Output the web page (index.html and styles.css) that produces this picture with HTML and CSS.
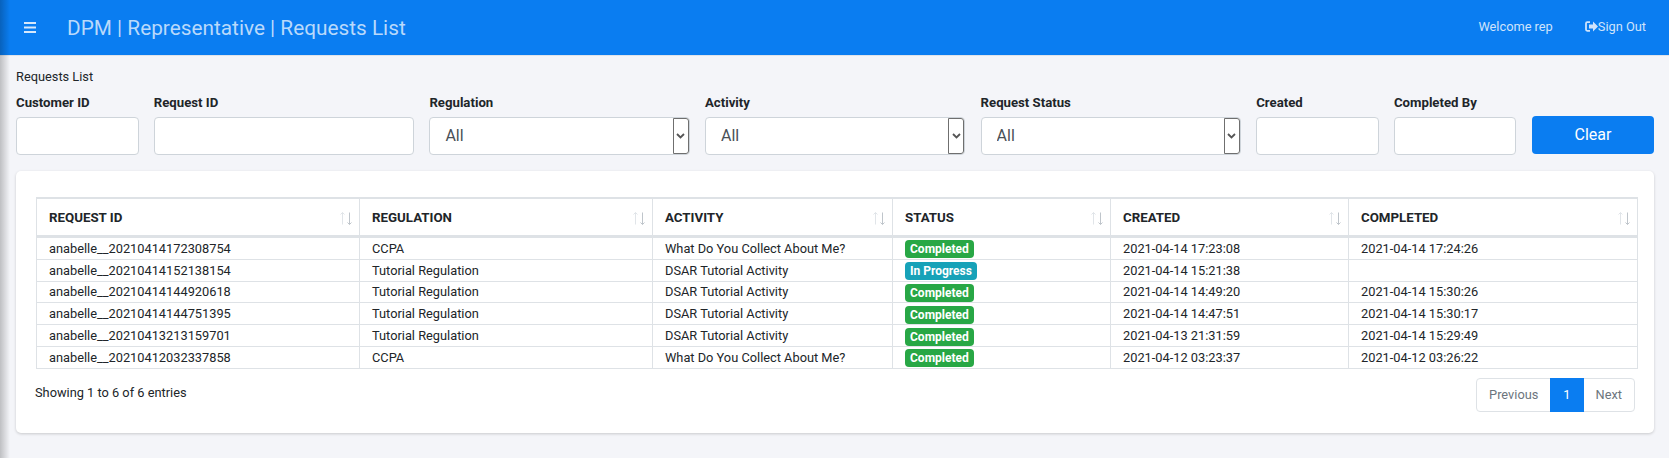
FILE: index.html
```html
<!DOCTYPE html>
<html lang="en">
<head>
  <meta charset="UTF-8">
  <title>DPM | Representative | Requests List</title>
  <meta name="viewport" content="width=device-width, initial-scale=1.0">
  <link rel="stylesheet" href="styles.css">
</head>
<body>
  <div class="side-shadow"></div>

  <svg class="sprite" width="0" height="0">
    <symbol id="sort-arrows" viewBox="0 0 14 13">
      <path d="M3.5 12.5V.5M1.5 2.5l2-2 2 2" fill="none" stroke="#e1e5e9"/>
      <path d="M10.5.5v12M8.5 10.5l2 2 2-2" fill="none" stroke="#bfc5cb"/>
    </symbol>
    <symbol id="chevron" viewBox="0 0 9 6">
      <path d="M1 1l3.5 3.5L8 1" fill="none" stroke="#555" stroke-width="1.8"/>
    </symbol>
  </svg>

  <header class="topbar">
    <span class="menu-btn">
      <svg width="12" height="11" viewBox="0 0 12 11"><path d="M0 1h12M0 5.5h12M0 10h12" stroke="#d6e8fc" stroke-width="2"/></svg>
    </span>
    <h1 class="page-title">DPM | Representative | Requests List</h1>
    <span class="welcome">Welcome rep</span>
    <a class="sign-out" href="#">
      <svg width="13" height="11" viewBox="0 0 13 11"><path d="M5 1.2H2.2Q1 1.2 1 2.4v6.2q0 1.2 1.2 1.2H5" fill="none" stroke="#cfe3fb" stroke-width="1.8"/><path d="M4 3.6h4V.6l5 4.9-5 4.9v-3H4z" fill="#cfe3fb"/></svg>Sign Out
    </a>
  </header>

  <main class="content">
    <div class="crumb">Requests List</div>

    <form class="filters">
      <div class="field f-small">
        <label for="customer">Customer ID</label>
        <input type="text" id="customer">
      </div>
      <div class="field f-wide">
        <label for="request">Request ID</label>
        <input type="text" id="request">
      </div>
      <div class="field f-wide">
        <label for="regulation">Regulation</label>
        <div class="select-wrap">
          <select id="regulation"><option>All</option></select>
          <span class="select-arrow"><svg width="9" height="6"><use href="#chevron"/></svg></span>
        </div>
      </div>
      <div class="field f-wide">
        <label for="activity">Activity</label>
        <div class="select-wrap">
          <select id="activity"><option>All</option></select>
          <span class="select-arrow"><svg width="9" height="6"><use href="#chevron"/></svg></span>
        </div>
      </div>
      <div class="field f-wide">
        <label for="status">Request Status</label>
        <div class="select-wrap">
          <select id="status"><option>All</option></select>
          <span class="select-arrow"><svg width="9" height="6"><use href="#chevron"/></svg></span>
        </div>
      </div>
      <div class="field f-small">
        <label for="created">Created</label>
        <input type="text" id="created">
      </div>
      <div class="field f-small">
        <label for="completed">Completed By</label>
        <input type="text" id="completed">
      </div>
      <button type="button" class="btn-clear">Clear</button>
    </form>

    <section class="card">
      <table class="requests">
        <colgroup>
          <col class="c1"><col class="c2"><col class="c3"><col class="c4"><col class="c5"><col class="c6">
        </colgroup>
        <thead>
          <tr>
            <th>REQUEST ID<svg class="sort" width="14" height="13"><use href="#sort-arrows"/></svg></th>
            <th>REGULATION<svg class="sort" width="14" height="13"><use href="#sort-arrows"/></svg></th>
            <th>ACTIVITY<svg class="sort" width="14" height="13"><use href="#sort-arrows"/></svg></th>
            <th>STATUS<svg class="sort" width="14" height="13"><use href="#sort-arrows"/></svg></th>
            <th>CREATED<svg class="sort" width="14" height="13"><use href="#sort-arrows"/></svg></th>
            <th>COMPLETED<svg class="sort" width="14" height="13"><use href="#sort-arrows"/></svg></th>
          </tr>
        </thead>
        <tbody>
          <tr>
            <td>anabelle__20210414172308754</td><td>CCPA</td><td>What Do You Collect About Me?</td>
            <td><span class="badge done">Completed</span></td><td>2021-04-14 17:23:08</td><td>2021-04-14 17:24:26</td>
          </tr>
          <tr>
            <td>anabelle__20210414152138154</td><td>Tutorial Regulation</td><td>DSAR Tutorial Activity</td>
            <td><span class="badge progress">In Progress</span></td><td>2021-04-14 15:21:38</td><td></td>
          </tr>
          <tr>
            <td>anabelle__20210414144920618</td><td>Tutorial Regulation</td><td>DSAR Tutorial Activity</td>
            <td><span class="badge done">Completed</span></td><td>2021-04-14 14:49:20</td><td>2021-04-14 15:30:26</td>
          </tr>
          <tr>
            <td>anabelle__20210414144751395</td><td>Tutorial Regulation</td><td>DSAR Tutorial Activity</td>
            <td><span class="badge done">Completed</span></td><td>2021-04-14 14:47:51</td><td>2021-04-14 15:30:17</td>
          </tr>
          <tr>
            <td>anabelle__20210413213159701</td><td>Tutorial Regulation</td><td>DSAR Tutorial Activity</td>
            <td><span class="badge done">Completed</span></td><td>2021-04-13 21:31:59</td><td>2021-04-14 15:29:49</td>
          </tr>
          <tr>
            <td>anabelle__20210412032337858</td><td>CCPA</td><td>What Do You Collect About Me?</td>
            <td><span class="badge done">Completed</span></td><td>2021-04-12 03:23:37</td><td>2021-04-12 03:26:22</td>
          </tr>
        </tbody>
      </table>

      <div class="table-foot">
        <span class="info">Showing 1 to 6 of 6 entries</span>
        <nav class="pager">
          <a href="#">Previous</a>
          <a href="#" class="active">1</a>
          <a href="#">Next</a>
        </nav>
      </div>
    </section>
  </main>
</body>
</html>
```

FILE: styles.css
```css
html, body {
  height: 100%;
}

body {
  margin: 0;
  font-family: Roboto, "Liberation Sans", sans-serif;
  font-size: 12.8px;
  color: #212529;
  background-color: #f4f5f9;
  overflow: hidden;
}

.sprite {
  display: block;
}

.side-shadow {
  position: absolute;
  left: 0;
  top: 0;
  bottom: 0;
  width: 10px;
  background: linear-gradient(to right, rgba(0, 0, 0, 0.22), rgba(0, 0, 0, 0));
}

.topbar {
  display: flex;
  align-items: center;
  height: 55px;
  padding: 0 23px 0 24px;
  background-color: #0a7df1;
  border-bottom: 1px solid #dfe3ea;
  color: #cfe3fb;
}

.menu-btn {
  display: flex;
  margin-right: 31px;
}

.page-title {
  flex: 1;
  margin: 0;
  font-size: 20.8px;
  font-weight: 400;
  color: #b9d9fb;
}

.welcome {
  margin: 0 32px 3px 0;
}

.sign-out {
  display: flex;
  align-items: center;
  margin-bottom: 3px;
  color: #cfe3fb;
  text-decoration: none;
}

.content {
  padding: 13px 15px 0 16px;
}

.crumb {
  line-height: 16px;
}

.filters {
  display: flex;
  align-items: flex-end;
  gap: 15.3px;
  margin-top: 9px;
}

.field label {
  display: block;
  margin-bottom: 6px;
  padding-top: 1px;
  font-size: 13.2px;
  font-weight: 700;
  line-height: 16px;
}

.f-small {
  flex: 0 0 122.5px;
}

.f-wide {
  flex: 0 0 260.3px;
}

.field input,
.field select {
  display: block;
  width: 100%;
  height: 38px;
  box-sizing: border-box;
  border: 1px solid #ced4da;
  border-radius: 4px;
  background-color: #fff;
  font-family: inherit;
}

.field select {
  appearance: none;
  padding: 0 15px 2px;
  font-size: 16px;
  color: #495057;
}

.select-wrap {
  position: relative;
}

.select-arrow {
  position: absolute;
  right: 1px;
  top: 1px;
  bottom: 1px;
  width: 16px;
  display: flex;
  align-items: center;
  justify-content: center;
  background-color: #fff;
  border: 1px solid #6f6f6f;
  border-radius: 0 3px 3px 0;
  box-sizing: border-box;
}

.btn-clear {
  flex: 0 0 122.5px;
  height: 38px;
  margin-bottom: 1px;
  padding: 0 0 2px;
  border: none;
  border-radius: 4px;
  background-color: #0a7df1;
  color: #fff;
  font-family: inherit;
  font-size: 16px;
}

.card {
  height: 262px;
  box-sizing: border-box;
  margin-top: 16px;
  padding: 26px 18px 0 20px;
  background-color: #fff;
  border-radius: 5px;
  box-shadow: 0 1px 3px rgba(0, 0, 0, 0.18);
}

.requests {
  width: 1601px;
  table-layout: fixed;
  border-collapse: collapse;
  border: 1px solid #dee2e6;
  border-top-width: 2px;
}

.c1 { width: 323px; }
.c2 { width: 293px; }
.c3 { width: 240px; }
.c4 { width: 218px; }
.c5 { width: 238px; }
.c6 { width: 289px; }

.requests th,
.requests td {
  border: 1px solid #dee2e6;
  padding: 0 12px;
  text-align: left;
}

.requests th {
  position: relative;
  height: 36px;
  font-size: 13.3px;
  font-weight: 700;
  border-top-width: 2px;
  border-bottom-width: 3px;
}

.requests td {
  height: 19.8px;
  padding-top: 1px;
  line-height: 16px;
}

.sort {
  position: absolute;
  right: 6px;
  top: 13px;
}

.badge {
  display: inline-block;
  height: 18px;
  margin-top: 1px;
  padding: 0 5px;
  line-height: 18px;
  border-radius: 4px;
  color: #fff;
  font-size: 12px;
  font-weight: 700;
  vertical-align: middle;
}

.done {
  background-color: #28a745;
}

.progress {
  background-color: #17a2b8;
}

.table-foot {
  display: flex;
  justify-content: space-between;
  align-items: flex-start;
  margin-top: 9px;
  padding-right: 1px;
}

.info {
  margin-left: -1px;
  padding-top: 7px;
  line-height: 16px;
}

.pager {
  display: flex;
  height: 34px;
  box-sizing: border-box;
  border: 1px solid #dee2e6;
  border-radius: 4px;
}

.pager a {
  display: flex;
  align-items: center;
  padding: 0 12px;
  color: #6c757d;
  text-decoration: none;
}

.pager .active {
  margin: -1px 0;
  padding: 0 13px;
  background-color: #0a7df1;
  color: #fff;
}
```
